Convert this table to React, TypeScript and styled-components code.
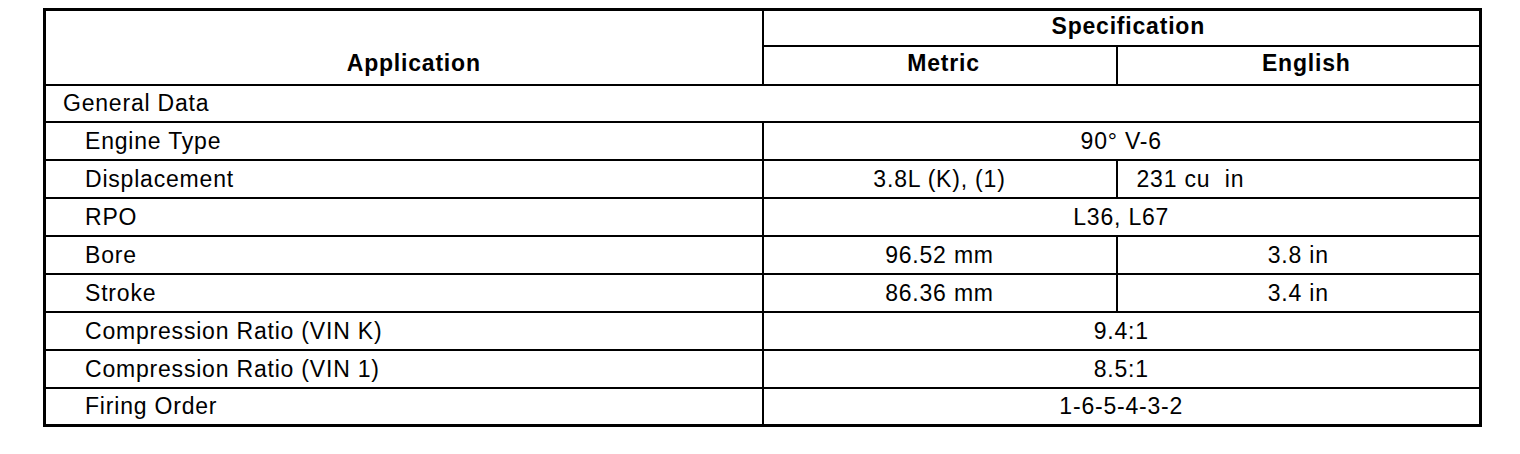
import React from "react";
import styled, { createGlobalStyle } from "styled-components";

const Global = createGlobalStyle`
  html, body { margin: 0; padding: 0; background: #fff; }
  body { font-family: "Liberation Sans", Arial, sans-serif; color: #000; }
`;

const Page = styled.div`
  padding: 8px 0 0 43px;
`;

const Table = styled.table`
  border-collapse: collapse;
  width: 1436px;
  table-layout: fixed;
  border: 3px solid #000;
  font-size: 23px;
  letter-spacing: 0.8px;
`;

const Th = styled.th<{ $h?: number; $valign?: string; $shift?: number; $bottom?: number }>`
  border: 2px solid #000;
  font-weight: bold;
  text-align: center;
  vertical-align: ${(p) => p.$valign || "middle"};
  height: ${(p) => p.$h || 36}px;
  padding: 0 0 ${(p) => p.$bottom ?? 3}px ${(p) => p.$shift ?? 8}px;
  box-sizing: border-box;
`;

const Td = styled.td<{ $align?: string; $indent?: number }>`
  border: 2px solid #000;
  height: 38px;
  padding: 1px 0 0 ${(p) => p.$indent ?? 0}px;
  text-align: ${(p) => p.$align || "center"};
  vertical-align: middle;
  white-space: pre;
  box-sizing: border-box;
`;

type Row = {
  label: string;
  metric?: string;
  english?: string;
  span?: string;
  englishLeft?: boolean;
};

const rows: Row[] = [
  { label: "Engine Type", span: "90° V-6" },
  { label: "Displacement", metric: "3.8L (K), (1)", english: "231 cu  in", englishLeft: true },
  { label: "RPO", span: "L36, L67" },
  { label: "Bore", metric: "96.52 mm", english: "3.8 in" },
  { label: "Stroke", metric: "86.36 mm", english: "3.4 in" },
  { label: "Compression Ratio (VIN K)", span: "9.4:1" },
  { label: "Compression Ratio (VIN 1)", span: "8.5:1" },
  { label: "Firing Order", span: "1-6-5-4-3-2" },
];

export default function App() {
  return (
    <Page>
      <Global />
      <Table>
        <colgroup>
          <col style={{ width: 718 }} />
          <col style={{ width: 354 }} />
          <col style={{ width: 364 }} />
        </colgroup>
        <thead>
          <tr>
            <Th rowSpan={2} $valign="bottom" $h={36} $shift={20} $bottom={7}>
              Application
            </Th>
            <Th colSpan={2} $h={36} $shift={14}>
              Specification
            </Th>
          </tr>
          <tr>
            <Th $h={39}>Metric</Th>
            <Th $h={39} $shift={16}>English</Th>
          </tr>
        </thead>
        <tbody>
          <tr>
            <Td colSpan={3} $align="left" $indent={17} style={{ height: 37 }}>
              General Data
            </Td>
          </tr>
          {rows.map((r) => (
            <tr key={r.label}>
              <Td $align="left" $indent={39}>
                {r.label}
              </Td>
              {r.span ? (
                <Td colSpan={2}>{r.span}</Td>
              ) : (
                <>
                  <Td>{r.metric}</Td>
                  <Td $align={r.englishLeft ? "left" : "center"} $indent={r.englishLeft ? 19 : 0}>
                    {r.english}
                  </Td>
                </>
              )}
            </tr>
          ))}
        </tbody>
      </Table>
    </Page>
  );
}
